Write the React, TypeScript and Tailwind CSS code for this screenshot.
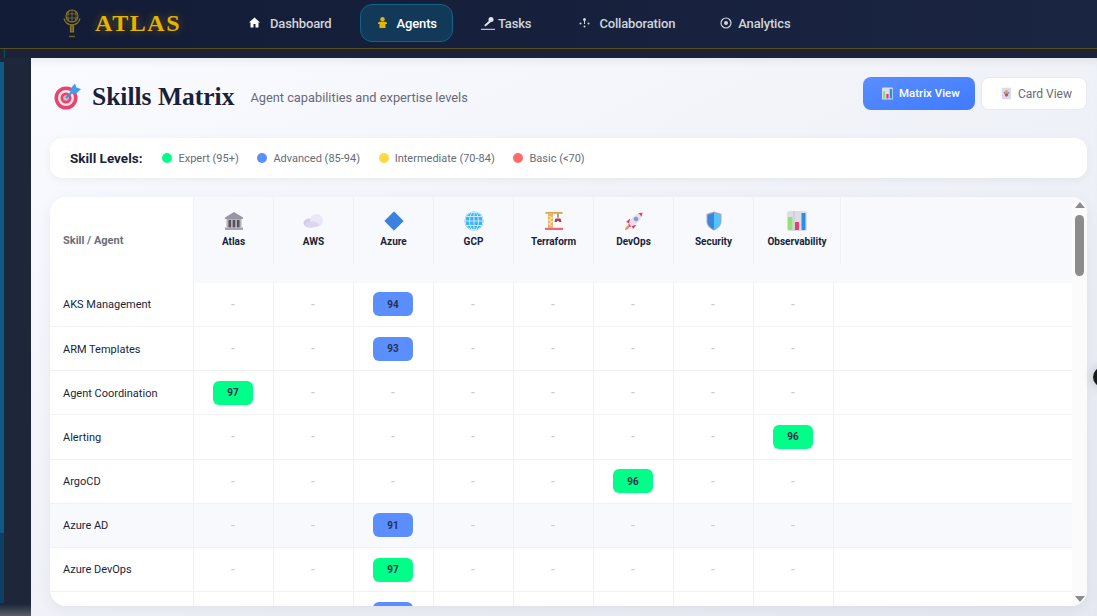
import type { ReactNode } from "react";

function LogoIcon() {
  return (
    <svg width="24" height="30" viewBox="0 0 24 30" fill="none" stroke="#8a7428" strokeWidth="1.2">
      <circle cx="12" cy="8" r="6" />
      <path d="M6.5 6h11M6.5 10h11M12 2v12M9 3c-1.500 3-1.500 7 0 10M15 3c1.500 3 1.500 7 0 10" strokeWidth="0.8" />
      <path d="M4 10.500c1 4 4 6 8 6.500 4-.5 7-2.500 8-6.500" />
      <path d="M10.500 17h3v7h-3z" fill="#6d5c20" />
      <path d="M9 28.500h6" stroke="#6d5c20" strokeWidth="1.500" />
    </svg>
  );
}

function HomeIcon() {
  return (
    <svg width="11" height="11" viewBox="0 0 11 11" fill="#fff">
      <path d="M5.500.5L11 5.500H9.500v5h-3V7h-2v3.500h-3v-5H0z" />
    </svg>
  );
}

function PersonIcon() {
  return (
    <svg width="11" height="11" viewBox="0 0 11 11" fill="#e6b400">
      <circle cx="5.500" cy="2.300" r="2.200" />
      <path d="M1 6.500c0-1.200 1-1.700 2-1.700h5c1 0 2 .5 2 1.700v.6H8.500V11h-6V7.100H1z" />
    </svg>
  );
}

function TasksIcon() {
  return (
    <svg width="14" height="14" viewBox="0 0 14 14" fill="#e5e7eb" className="shrink-0">
      <circle cx="10" cy="3.500" r="2.500" />
      <path d="M8.300 4.500l1.500 1.500-5.300 4.500-1.300-1.300z" />
      <path d="M0 12.800h14v1H0z" />
    </svg>
  );
}

function CollabIcon() {
  return (
    <svg width="11" height="11" viewBox="0 0 11 11" fill="#d1d5db">
      <circle cx="5.500" cy="2.500" r="1.500" />
      <path d="M5 4h1v3H5z" />
      <circle cx="1.500" cy="6.500" r="1" />
      <circle cx="9.500" cy="6.500" r="1" />
      <circle cx="5.500" cy="9.500" r="1" />
    </svg>
  );
}

function AnalyticsIcon() {
  return (
    <svg width="12" height="12" viewBox="0 0 12 12" fill="none" stroke="#d1d5db" strokeWidth="1.200">
      <circle cx="6" cy="6" r="5" />
      <circle cx="6" cy="6" r="2" fill="#d1d5db" stroke="none" />
    </svg>
  );
}

function TargetEmoji() {
  return (
    <svg width="27" height="27" viewBox="0 0 27 27">
      <circle cx="12" cy="15" r="11.500" fill="#e8436f" />
      <circle cx="12" cy="15" r="8" fill="#f6e4ea" />
      <circle cx="12" cy="15" r="5.500" fill="#e8436f" />
      <circle cx="12" cy="15" r="2.800" fill="#c9bfc8" />
      <path d="M12 15l8-8" stroke="#4a90d9" strokeWidth="2" />
      <path d="M16 11l1-6 4-4.500 1.500 4 4.500 1.500-4 4z" fill="#3f9fe8" />
    </svg>
  );
}

function MatrixEmoji() {
  return (
    <svg width="11" height="13" viewBox="0 0 12 13">
      <rect width="12" height="13" rx="1" fill="#dcdfe8" />
      <rect x="1" y="4" width="2.500" height="8" fill="#86e07e" />
      <rect x="4.700" y="7" width="2.500" height="5" fill="#ec3a72" />
      <rect x="8.400" y="1.500" width="2.800" height="10.500" fill="#2a8fe0" />
    </svg>
  );
}

function CardEmoji() {
  return (
    <svg width="9" height="13" viewBox="0 0 10 13">
      <rect width="10" height="13" rx="1" fill="#dcd8e6" />
      <circle cx="5" cy="4.500" r="1.800" fill="#e0a93a" />
      <circle cx="5" cy="8" r="2" fill="#d8437f" />
      <circle cx="2.800" cy="5.800" r="0.900" fill="#4a90e2" />
      <circle cx="7.200" cy="5.800" r="0.900" fill="#4a90e2" />
    </svg>
  );
}

const bank = (
  <svg width="20" height="20" viewBox="0 0 20 20">
    <path d="M10 1L19 6.500V8H1V6.500z" fill="#9a95a3" />
    <rect x="2.500" y="8" width="15" height="8.500" fill="#b5b0bc" />
    <rect x="4.500" y="9" width="2.500" height="7.500" fill="#56525e" />
    <rect x="8.700" y="9" width="2.500" height="7.500" fill="#56525e" />
    <rect x="13" y="9" width="2.500" height="7.500" fill="#56525e" />
    <rect x="1" y="16.500" width="18" height="2.500" fill="#a8a3b0" />
  </svg>
);

const cloud = (
  <svg width="21" height="20" viewBox="0 0 21 20">
    <ellipse cx="6.500" cy="12" rx="6" ry="4.500" fill="#d4cdea" />
    <circle cx="13.500" cy="9.500" r="6.500" fill="#ebe7f6" />
    <ellipse cx="9" cy="13.500" rx="7" ry="3" fill="#dcd6ee" />
  </svg>
);

const diamond = (
  <svg width="20" height="20" viewBox="0 0 20 20">
    <path d="M10 .8L19.200 10 10 19.200.8 10z" fill="#3a82e0" strokeLinejoin="round" stroke="#3a82e0" />
  </svg>
);

const globe = (
  <svg width="20" height="20" viewBox="0 0 20 20" fill="none">
    <circle cx="10" cy="10" r="9.500" fill="#3fb2f2" />
    <g stroke="#c4ecff" strokeWidth="1">
      <circle cx="10" cy="10" r="9" />
      <ellipse cx="10" cy="10" rx="4.500" ry="9" />
      <path d="M10 1v18M1 10h18M2.200 5.500h15.600M2.200 14.500h15.600" />
    </g>
  </svg>
);

const crane = (
  <svg width="20" height="20" viewBox="0 0 20 20">
    <rect x="1.500" y="1" width="17" height="1.800" fill="#d9a74a" />
    <rect x="4" y="2.800" width="5" height="14" fill="#e3b767" />
    <path d="M4.500 5l4 2-4 2 4 2-4 2 4 2" stroke="#fff1d0" strokeWidth="0.800" fill="none" />
    <path d="M14 2.800v4" stroke="#7a3b3b" strokeWidth="1" />
    <path d="M10.500 11l1-3.500h5l1 3.500h-2l-1.500-1.500-1.500 1.500z" fill="#a83a4a" />
    <rect x="1" y="16.800" width="18" height="2.200" fill="#f2647c" />
  </svg>
);

const rocket = (
  <svg width="20" height="20" viewBox="0 0 20 20">
    <path d="M3.500 14.500c-1.500 1-2.500 3-2.500 4.500 1.500 0 3.500-1 4.500-2.500z" fill="#f59a3c" />
    <path d="M6 7.500L2 11l3.500 1.500zM12.500 14L9 18l-1.500-3.500z" fill="#ec3a6a" />
    <path d="M4.500 15.500C4 10 10 2.500 18.500 1.500 18 9.500 10.500 16 4.500 15.500z" fill="#eadfe6" />
    <path d="M14 2.500c1.500.5 3 2 3.500 3.500l1-4.500z" fill="#ec3a6a" />
    <path d="M4.500 12.500l3 3-3 .5z" fill="#ec3a6a" />
    <circle cx="12" cy="8" r="2" fill="#5ba7e8" stroke="#9a93a8" strokeWidth="0.600" />
  </svg>
);

const shield = (
  <svg width="20" height="20" viewBox="0 0 20 20">
    <path d="M10 .5L2.500 3v7c0 4.500 3 7.500 7.500 9.500 4.500-2 7.500-5 7.500-9.500V3z" fill="#a9a7b4" />
    <path d="M10 1.800L3.500 4v6c0 4 2.500 6.700 6.500 8.400z" fill="#3a86e0" />
    <path d="M10 1.800L16.500 4v6c0 4-2.500 6.700-6.500 8.400z" fill="#55c4fb" />
  </svg>
);

const chart = (
  <svg width="20" height="20" viewBox="0 0 20 20">
    <rect width="20" height="20" rx="2" fill="#dcdde6" />
    <rect x="6.500" y="0" width="1" height="20" fill="#c4c5d0" />
    <rect x="1" y="6" width="4.500" height="13" fill="#95e07c" />
    <rect x="8" y="11" width="4" height="8" fill="#ec3a72" />
    <rect x="14.500" y="2" width="4" height="17" fill="#2a8fe0" />
  </svg>
);

const AGENTS: { name: string; icon: ReactNode; wide?: boolean }[] = [
  { name: "Atlas", icon: bank },
  { name: "AWS", icon: cloud },
  { name: "Azure", icon: diamond },
  { name: "GCP", icon: globe },
  { name: "Terraform", icon: crane },
  { name: "DevOps", icon: rocket },
  { name: "Security", icon: shield },
  { name: "Observability", icon: chart, wide: true },
];

// agent index -> score, one entry for each skill row
// last row is cut by the card's bottom edge, only the top of its badge shows
const ROWS: { skill: string; agent: number; score: number; hover?: boolean }[] = [
  { skill: "AKS Management", agent: 2, score: 94 },
  { skill: "ARM Templates", agent: 2, score: 93 },
  { skill: "Agent Coordination", agent: 0, score: 97 },
  { skill: "Alerting", agent: 7, score: 96 },
  { skill: "ArgoCD", agent: 5, score: 96 },
  { skill: "Azure AD", agent: 2, score: 91, hover: true },
  { skill: "Azure DevOps", agent: 2, score: 97 },
  { skill: "", agent: 2, score: 92 },
];

const LEVELS = [
  { label: "Expert (95+)", dot: "bg-[#00ff88]" },
  { label: "Advanced (85-94)", dot: "bg-[#5b8fff]" },
  { label: "Intermediate (70-84)", dot: "bg-[#ffd93d]" },
  { label: "Basic (<70)", dot: "bg-[#ff6b6b]" },
];

function NavItem({
  icon,
  label,
  slot,
  active,
}: {
  icon: ReactNode;
  label: string;
  slot: string;
  active?: boolean;
}) {
  return (
    <div
      className={
        "flex h-[38px] items-center gap-1 rounded-xl border pl-4 text-[13px] font-medium tracking-[-0.15px] " +
        (active
          ? "border-[#0f6487] bg-[#123a58] pr-[15px] text-white"
          : "border-transparent pr-4 text-[#d1d5db]")
      }
    >
      <span className={"flex " + slot}>{icon}</span>
      <span className="pt-[2px]">{label}</span>
    </div>
  );
}

function ScoreCell({ score, blank }: { score: number; blank: boolean }) {
  return (
    <div
      className={
        "flex h-6 w-10 items-center justify-center rounded-md text-[10px] font-bold text-[#2a3050] " +
        (score >= 95 ? "bg-[#00ff88]" : "bg-[#5b8fff]")
      }
    >
      {blank ? null : score}
    </div>
  );
}

export default function App() {
  return (
    <div className="flex h-[616px] w-[1097px] flex-col overflow-hidden bg-[#1a2035] font-['Roboto',sans-serif]">
      <header className="flex h-[49px] shrink-0 items-center border-b border-[#5a4d1e] bg-linear-to-r from-[#131c36] to-[#1a2542] pb-[3px]">
        <div className="ml-[60px] flex w-[172px] items-center">
          <LogoIcon />
          <span className="ml-[11px] font-['Liberation_Serif',serif] text-[24px] leading-none font-bold tracking-[1.600px] text-[#e6b400] [text-shadow:0_0_8px_rgba(230,180,0,0.4)]">
            ATLAS
          </span>
        </div>
        <nav className="flex items-center gap-[11px]">
          <NavItem icon={<HomeIcon />} label="Dashboard" slot="w-[17px]" />
          <NavItem icon={<PersonIcon />} label="Agents" slot="w-[16px]" active />
          <NavItem icon={<TasksIcon />} label="Tasks" slot="w-[13px]" />
          <NavItem icon={<CollabIcon />} label="Collaboration" slot="w-[19px] pl-[3px]" />
          <NavItem icon={<AnalyticsIcon />} label="Analytics" slot="w-[14px]" />
        </nav>
      </header>

      <div className="h-[9px] shrink-0 bg-[#1c2238]">
        <div className="h-full w-[5px] border-r border-[#0e4a6a]" />
      </div>

      <div className="flex min-h-0 flex-1">
        <aside className="flex w-[31px] shrink-0 flex-col bg-[#1d2739]">
          <div className="mt-[4px] h-[471px] w-[4px] bg-[#0e5a80]" />
          <div className="h-[70px] w-[4px] bg-[#0d3f66]" />
          <div className="mt-auto h-[12px] bg-linear-to-b from-[#1d2739] to-[#5a5f68]" />
        </aside>

        <main className="relative flex min-w-0 flex-1 flex-col bg-linear-to-br from-[#fafbff] to-[#e6e9f2] pt-[19px] pr-[10px] pl-[19px] shadow-[inset_0_8px_10px_-6px_rgba(0,0,0,0.08)]">
          <div className="flex h-[33px] shrink-0 items-center justify-between">
            <div className="mt-[6px] flex items-center">
              <span className="ml-1 flex">
                <TargetEmoji />
              </span>
              <h1 className="ml-[11px] font-['Liberation_Serif',serif] text-[25.500px] leading-none font-bold text-[#1a1f3a]">
                Skills Matrix
              </h1>
              <p className="mt-[3px] ml-4 text-[12.800px] text-[#666b78]">Agent capabilities and expertise levels</p>
            </div>
            <div className="flex gap-[6px]">
              <button className="flex h-[33px] w-[112px] items-center gap-[6px] rounded-lg bg-linear-to-br from-[#5a8dff] to-[#3f7bff] pl-[19px] text-[11.500px] font-medium text-white">
                <MatrixEmoji />
                Matrix View
              </button>
              <button className="flex h-[33px] w-[106px] items-center gap-[7px] rounded-lg border border-[#e8eaf0] bg-white pl-[20px] text-[12px] text-[#666b78]">
                <CardEmoji />
                Card View
              </button>
            </div>
          </div>

          <div className="mt-[28px] flex h-[40px] shrink-0 items-center rounded-xl bg-white pl-[20px] shadow-[0_2px_10px_rgba(0,0,0,0.05)]">
            <span className="mr-[20px] text-[13.500px] font-bold text-[#1a1f3a]">Skill Levels:</span>
            <div className="flex items-center gap-[18.700px]">
              {LEVELS.map((level) => (
                <div key={level.label} className="flex items-center gap-[6px] text-[11px] text-[#666b78]">
                  <span className={"size-[10px] rounded-full " + level.dot} />
                  <span className="pt-[2px]">{level.label}</span>
                </div>
              ))}
            </div>
          </div>

          <div className="mt-[19px] flex h-[409px] shrink-0 overflow-hidden rounded-2xl bg-white shadow-[0_4px_16px_rgba(0,0,0,0.06)]">
            <div className="min-w-0 flex-1 overflow-hidden">
              <div className="flex h-[85.800px] bg-[#f8f9fd]">
                <div className="flex w-[144px] items-center border-r border-[#eef0f4] bg-white pt-[2px] pl-[13px] text-[11px] font-bold text-[#6b7078]">
                  Skill / Agent
                </div>
                {AGENTS.map((agent) => (
                  <div
                    key={agent.name}
                    className={
                      "flex h-[67px] flex-col items-center border-r border-[#eef0f4] pt-[14px] " +
                      (agent.wide ? "w-[87px]" : "w-[80px]")
                    }
                  >
                    {agent.icon}
                    <span className="mt-[3px] text-[10px] font-bold text-[#1a1f3a]">{agent.name}</span>
                  </div>
                ))}
              </div>
              {ROWS.map((row) => (
                <div
                  key={row.score + row.skill}
                  className={
                    "grid h-[44.200px] grid-cols-[144px_repeat(8,80px)_1fr] border-b border-[#f0f1f4] " +
                    (row.hover ? "bg-[#f8f9fc]" : "")
                  }
                >
                  <div className="flex items-center border-r border-[#f0f1f4] pt-[2.400px] pl-[13px] text-[11px] text-[#1a1f3a]">
                    {row.skill}
                  </div>
                  {AGENTS.map((agent, i) => (
                    <div
                      key={agent.name}
                      className="flex items-center justify-center border-r border-[#f0f1f4] pr-[1px] text-[14px] text-[#c8ccd3]"
                    >
                      {row.agent === i ? <ScoreCell score={row.score} blank={!row.skill} /> : row.skill ? "-" : null}
                    </div>
                  ))}
                  <div />
                </div>
              ))}
            </div>
            <div className="flex w-[15px] shrink-0 flex-col items-center bg-[#fbfbfb]">
              <span className="mt-[5px] size-0 border-x-[5px] border-b-[6px] border-x-transparent border-b-[#8c8c8c]" />
              <span className="mt-[7px] h-[61px] w-[9px] rounded-full bg-[#8c8c8c]" />
              <span className="mt-auto mb-[4px] size-0 border-x-[5px] border-t-[6px] border-x-transparent border-t-[#8c8c8c]" />
            </div>
          </div>

          <div className="absolute top-[309px] right-[-16px] size-[20px] rounded-full bg-[#1a1a1a] shadow-[0_0_12px_rgba(0,0,0,0.2)]" />
        </main>
      </div>
    </div>
  );
}
